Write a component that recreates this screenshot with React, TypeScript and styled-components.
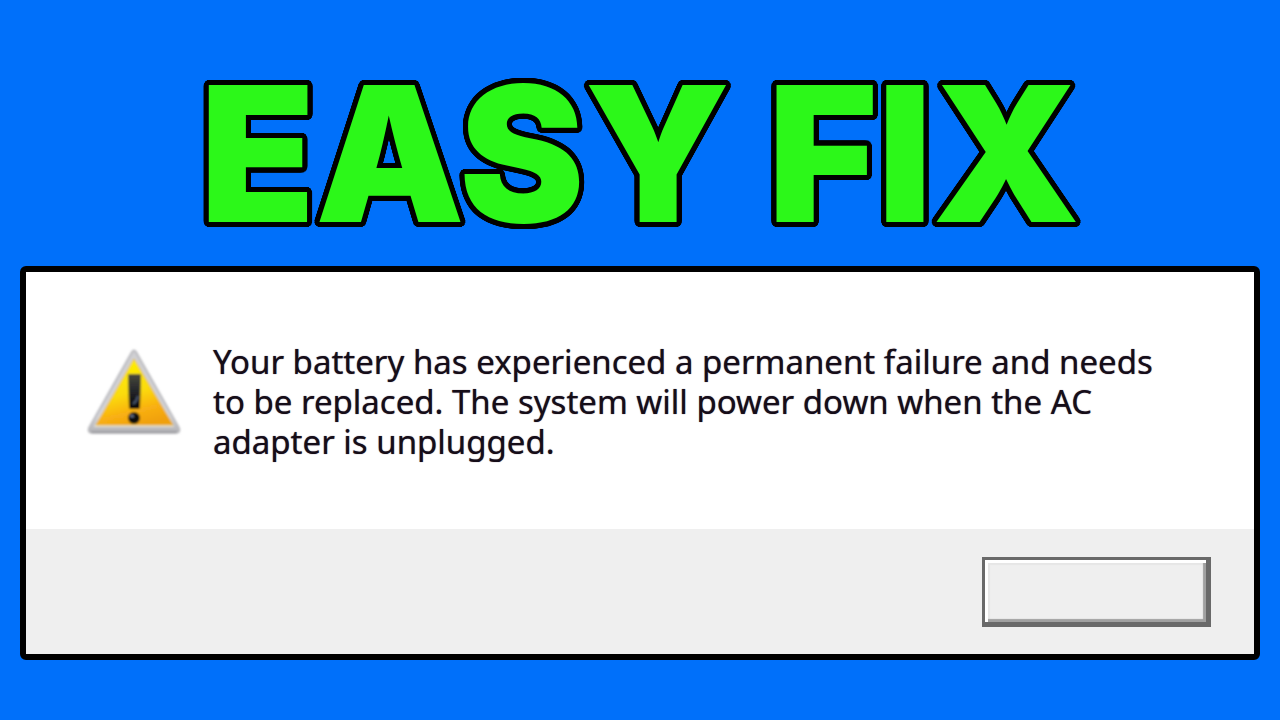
import React from "react";
import styled, { createGlobalStyle } from "styled-components";

const PageStyle = createGlobalStyle`
  *, *::before, *::after { box-sizing: border-box; }
  html, body { margin: 0; background: #0070fa; }
`;

/* A ring of shadows makes a round-cornered outline around the letters. */
const outline = (radius: number, color: string, steps = 48) =>
  Array.from({ length: steps }, (_, i) => {
    const a = (i / steps) * Math.PI * 2;
    return `${(Math.cos(a) * radius).toFixed(2)}px ${(Math.sin(a) * radius).toFixed(2)}px 0 ${color}`;
  }).join(", ");

const Page = styled.main`
  min-height: 100vh;
  display: flex;
  flex-direction: column;
  padding: 54px 20px 60px;
`;

const Headline = styled.h1`
  margin: 0 0 12px;
  font-family: Inter, "DejaVu Sans", sans-serif;
  font-size: 188px;
  font-weight: 900;
  line-height: 200px;
  text-align: center;
  white-space: nowrap;
  color: #2cf819;
  text-shadow: ${outline(5, "#000")};
`;

const Dialog = styled.section`
  display: flex;
  flex-direction: column;
  flex: 1;
  border: 6px solid #000;
  border-radius: 6px;
  background: #fff;
`;

const Message = styled.div`
  flex: 1;
  display: flex;
  align-items: flex-start;
  gap: 27px;
  padding: 70px 60px 60px;
`;

const Icon = styled.svg`
  flex: none;
  width: 100px;
  height: 94px;
  margin-top: 2px;
`;

const MessageText = styled.p`
  margin: 0;
  max-width: 980px;
  font-family: "Noto Sans", "Segoe UI", sans-serif;
  font-size: 33px;
  font-weight: 400;
  line-height: 40px;
  color: #150d18;
  text-shadow: 0 0 1px #5a4a60;
`;

const Footer = styled.footer`
  display: flex;
  justify-content: flex-end;
  padding: 28px 43px 27px;
  background: #efefef;
`;

const DialogButton = styled.button`
  width: 229px;
  height: 70px;
  padding: 0;
  border: solid #696969;
  border-width: 3px 5px 5px 3px;
  background: #efefef;
  box-shadow: inset 3px 3px 0 #fff, inset -3px -3px 1px #a0a0a0, inset 5px 5px 1px #e6e6e6;
`;

function WarningIcon() {
  return (
    <Icon viewBox="0 0 100 94" role="img" aria-label="Warning">
      <defs>
        <linearGradient id="rim" x1="0" y1="0" x2="0" y2="1">
          <stop offset="0" stopColor="#cfcfd2" />
          <stop offset=".8" stopColor="#d4d4d8" />
          <stop offset="1" stopColor="#b0b0b4" />
        </linearGradient>
        <linearGradient id="face" x1=".3" y1="0" x2=".6" y2="1">
          <stop offset="0" stopColor="#fff000" />
          <stop offset=".5" stopColor="#fbdc0c" />
          <stop offset=".78" stopColor="#f9b012" />
          <stop offset="1" stopColor="#f0a010" />
        </linearGradient>
        <linearGradient id="mark" x1="0" y1="0" x2="0" y2="1">
          <stop offset="0" stopColor="#4a4a3c" />
          <stop offset=".45" stopColor="#26282c" />
          <stop offset="1" stopColor="#050608" />
        </linearGradient>
        <filter id="soft" x="-10%" y="-10%" width="120%" height="120%">
          <feGaussianBlur stdDeviation="1.1" />
        </filter>
      </defs>
      <g filter="url(#soft)">
        <path d="M46 8 Q48 5 50 8 L93 84 Q95 89 89 89 L7 89 Q1 89 3 84 Z" fill="url(#rim)" stroke="#bcbcc0" strokeWidth="2" strokeLinejoin="round" />
        <path d="M5 88 H91" stroke="#a0a0a4" strokeWidth="2" />
        <path d="M48 14 L88 83 H8 Z" fill="#e6e3da" />
        <path d="M48 15 L87 81 H10 Z" fill="url(#face)" stroke="#e0b430" strokeWidth="1" />
        <path d="M43 30 H54 Q55 30 55 32 L54 63 Q54 65 52 65 H45 Q43 65 43 63 L42 32 Q42 30 43 30 Z" fill="url(#mark)" />
        <circle cx="48" cy="74" r="6" fill="#0b0c10" />
        <ellipse cx="46" cy="72" rx="2" ry="1.500" fill="#66718c" />
        <path d="M47 60 Q51 57 52 52" stroke="#46546c" strokeWidth="2" fill="none" />
      </g>
    </Icon>
  );
}

export default function App() {
  return (
    <>
      <PageStyle />
      <Page>
        <Headline>EASY FIX</Headline>
        <Dialog role="alertdialog" aria-describedby="battery-message">
          <Message>
            <WarningIcon />
            <MessageText id="battery-message">
              Your battery has experienced a permanent failure and needs to be replaced. The system will
              power down when the AC adapter is unplugged.
            </MessageText>
          </Message>
          <Footer>
            <DialogButton type="button" />
          </Footer>
        </Dialog>
      </Page>
    </>
  );
}
